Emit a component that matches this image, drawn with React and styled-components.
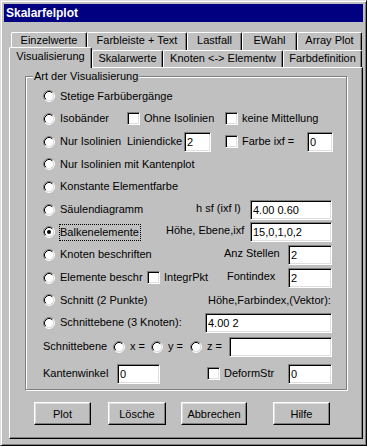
import React from 'react';
import styled, { createGlobalStyle } from 'styled-components';

const GlobalStyle = createGlobalStyle`
	html, body {
		margin: 0;
		padding: 0;
		background: #c0c0c0;
	}
	body {
		font-family: "Liberation Sans", Arial, sans-serif;
		font-size: 11px;
		color: #000;
	}
`;

const Window = styled.div`
	width: 367px;
	height: 446px;
	box-sizing: border-box;
	background: #c0c0c0;
	border: 1px solid;
	border-color: #dfdfdf #000 #000 #dfdfdf;
	box-shadow: inset 1px 1px 0 #fff, inset -1px -1px 0 #808080;
	padding: 3px;
	display: flex;
	flex-direction: column;
`;

const TitleBar = styled.div`
	height: 18px;
	flex: none;
	background: #000080;
	color: #fff;
	font-weight: bold;
	font-size: 12px;
	line-height: 18px;
	padding-left: 2px;
`;

const TabControl = styled.div`
	flex: 1;
	display: flex;
	flex-direction: column;
	margin: 10px 0 3px 5px;
`;

const TabRow = styled.div`
	display: flex;
	flex: none;
	height: ${ p => p.$h }px;
	padding-left: 2px;
`;

const Tab = styled.div`
	flex: none;
	box-sizing: border-box;
	width: ${ p => p.$w }px;
	height: ${ p => p.$active ? p.$h + 4 : p.$h }px;
	margin: ${ p => p.$active ? '-3px 0 -1px -2px' : '0' };
	position: relative;
	z-index: ${ p => p.$active ? 1 : 0 };
	background: #c0c0c0;
	border-top: 1px solid #fff;
	border-left: 1px solid #fff;
	border-right: 1px solid #000;
	border-radius: 2px 2px 0 0;
	box-shadow: inset -1px 0 0 #808080;
	text-align: center;
	line-height: ${ p => p.$active ? 17 : 15 }px;
	white-space: nowrap;
`;

const Panel = styled.div`
	flex: 1;
	box-sizing: border-box;
	border: 1px solid;
	border-color: #fff #000 #000 #fff;
	box-shadow: inset -1px -1px 0 #808080;
	padding: 8px 0 0 15px;
`;

const GroupBox = styled.div`
	box-sizing: border-box;
	width: 322px;
	height: 314px;
	border: 1px solid #808080;
	box-shadow: inset 1px 1px 0 #fff, 1px 1px 0 #fff;
`;

const Caption = styled.div`
	width: fit-content;
	margin: -7px 0 0 7px;
	padding: 0 1px;
	line-height: 13px;
	background: #c0c0c0;
`;

const Rows = styled.div`
	padding: 2px 0 0 17px;
`;

const Row = styled.div`
	display: flex;
	align-items: center;
	height: ${ p => p.$h || 22.67 }px;
	margin-top: ${ p => p.$mt || 0 }px;
	white-space: nowrap;
`;

const Cell = styled.div`
	flex: none;
	width: ${ p => p.$w }px;
	display: flex;
	align-items: center;
`;

const Choice = styled.label`
	display: flex;
	align-items: center;
	gap: 4px;
`;

const ChoiceText = styled.span`
	line-height: 15px;
	padding: 0 1px 0 0;
	border: 1px ${ p => p.$focus ? 'dotted #000' : 'solid transparent' };
`;

const Box = styled.span`
	flex: none;
	box-sizing: border-box;
	width: 13px;
	height: 13px;
	background: #fff;
	border: 1px solid;
	border-color: #808080 #fff #fff #808080;
	box-shadow: inset 1px 1px 0 #000, inset -1px -1px 0 #dfdfdf;
`;

const Text = styled.span`
	line-height: 15px;
	margin-top: ${ p => p.$up ? -3 : 0 }px;
`;

const Field = styled.input`
	flex: none;
	box-sizing: border-box;
	width: ${ p => p.$w }px;
	height: 20px;
	margin: 0;
	padding: 0 0 0 2px;
	border: 1px solid;
	border-color: #808080 #fff #fff #808080;
	box-shadow: inset 1px 1px 0 #000, inset -1px -1px 0 #dfdfdf;
	background: #fff;
	color: #000;
	font: 11px "Liberation Sans", Arial, sans-serif;
	outline: none;
`;

const ButtonRow = styled.div`
	display: flex;
	margin: 12px 0 0 9px;
`;

const Button = styled.button`
	flex: none;
	box-sizing: border-box;
	width: ${ p => p.$w }px;
	height: 23px;
	margin: 0 0 0 ${ p => p.$ml || 0 }px;
	padding: 0;
	background: #c0c0c0;
	border: 1px solid;
	border-color: #fff #000 #000 #fff;
	box-shadow: inset -1px -1px 0 #808080, inset 1px 1px 0 #dfdfdf;
	font: 11px "Liberation Sans", Arial, sans-serif;
	color: #000;
`;

const RadioIcon = ( { checked } ) => (
	<svg width="12" height="12" viewBox="0 0 12 12" style={ { flex: 'none' } }>
		<circle cx="6" cy="6" r="4.5" fill="#fff" />
		<path d="M2.11 9.89 A5.5 5.5 0 0 1 9.89 2.11" fill="none" stroke="#808080" />
		<path d="M9.89 2.11 A5.5 5.5 0 0 1 2.11 9.89" fill="none" stroke="#fff" />
		<path d="M2.82 9.18 A4.5 4.5 0 0 1 9.18 2.82" fill="none" stroke="#000" />
		<path d="M9.18 2.82 A4.5 4.5 0 0 1 2.82 9.18" fill="none" stroke="#dfdfdf" />
		{ checked && <circle cx="6" cy="6" r="2" fill="#000" /> }
	</svg>
);

const Option = ( { label, checked, focus } ) => (
	<Choice>
		<RadioIcon checked={ checked } />
		<ChoiceText $focus={ focus }>{ label }</ChoiceText>
	</Choice>
);

const Check = ( { label } ) => (
	<Choice>
		<Box />
		<Text>{ label }</Text>
	</Choice>
);

const backTabs = [
	[ 'Einzelwerte', 76 ],
	[ 'Farbleiste + Text', 100 ],
	[ 'Lastfall', 55 ],
	[ 'EWahl', 55 ],
	[ 'Array Plot', 65 ],
];

const frontTabs = [
	[ 'Visualisierung', 83, true ],
	[ 'Skalarwerte', 71 ],
	[ 'Knoten <-> Elementw', 120 ],
	[ 'Farbdefinition', 79 ],
];

export default function App() {
	return (
		<>
			<GlobalStyle />
			<Window>
				<TitleBar>Skalarfelplot</TitleBar>
				<TabControl>
					<TabRow $h={ 18 }>
						{ backTabs.map( ( [ name, w ] ) => (
							<Tab key={ name } $w={ w } $h={ 18 }>{ name }</Tab>
						) ) }
					</TabRow>
					<TabRow $h={ 17 }>
						{ frontTabs.map( ( [ name, w, active ] ) => (
							<Tab key={ name } $w={ w } $h={ 17 } $active={ active }>{ name }</Tab>
						) ) }
					</TabRow>
					<Panel>
						<GroupBox>
							<Caption>Art der Visualisierung</Caption>
							<Rows>
								<Row>
									<Option label="Stetige Farbübergänge" />
								</Row>
								<Row>
									<Cell $w={ 84 }><Option label="Isobänder" /></Cell>
									<Cell $w={ 98 }><Check label="Ohne Isolinien" /></Cell>
									<Check label="keine Mittellung" />
								</Row>
								<Row>
									<Cell $w={ 84 }><Option label="Nur Isolinien" /></Cell>
									<Cell $w={ 57 }><Text>Liniendicke</Text></Cell>
									<Cell $w={ 41 }><Field $w={ 27 } value="2" readOnly /></Cell>
									<Cell $w={ 82 }><Check label="Farbe ixf =" /></Cell>
									<Field $w={ 26 } value="0" readOnly />
								</Row>
								<Row>
									<Option label="Nur Isolinien mit Kantenplot" />
								</Row>
								<Row>
									<Option label="Konstante Elementfarbe" />
								</Row>
								<Row>
									<Cell $w={ 153 }><Option label="Säulendiagramm" /></Cell>
									<Cell $w={ 54 }><Text $up>h sf (ixf l)</Text></Cell>
									<Field $w={ 82 } value="4.00 0.60" readOnly />
								</Row>
								<Row>
									<Cell $w={ 123 }><Option label="Balkenelemente" checked focus /></Cell>
									<Cell $w={ 84 }><Text $up>Höhe, Ebene,ixf</Text></Cell>
									<Field $w={ 82 } value="15,0,1,0,2" readOnly />
								</Row>
								<Row>
									<Cell $w={ 181 }><Option label="Knoten beschriften" /></Cell>
									<Cell $w={ 64 }><Text $up>Anz Stellen</Text></Cell>
									<Field $w={ 44 } value="2" readOnly />
								</Row>
								<Row>
									<Cell $w={ 104 }><Option label="Elemente beschr" /></Cell>
									<Cell $w={ 80 }><Check label="IntegrPkt" /></Cell>
									<Cell $w={ 61 }><Text $up>Fontindex</Text></Cell>
									<Field $w={ 44 } value="2" readOnly />
								</Row>
								<Row>
									<Cell $w={ 165 }><Option label="Schnitt (2 Punkte)" /></Cell>
									<Text>Höhe,Farbindex,(Vektor):</Text>
								</Row>
								<Row>
									<Cell $w={ 162 }><Option label="Schnittebene (3 Knoten):" /></Cell>
									<Field $w={ 127 } value="4.00 2" readOnly />
								</Row>
								<Row $h={ 23 } $mt={ 1 }>
									<Cell $w={ 70 }><Text>Schnittebene</Text></Cell>
									<Cell $w={ 38 }><Option label="x =" /></Cell>
									<Cell $w={ 39 }><Option label="y =" /></Cell>
									<Cell $w={ 39 }><Option label="z =" /></Cell>
									<Field $w={ 103 } value="" readOnly />
								</Row>
								<Row $h={ 23 } $mt={ 4 }>
									<Cell $w={ 74 }><Text>Kantenwinkel</Text></Cell>
									<Cell $w={ 90 }><Field $w={ 43 } value="0" readOnly /></Cell>
									<Cell $w={ 81 }><Check label="DeformStr" /></Cell>
									<Field $w={ 44 } value="0" readOnly />
								</Row>
							</Rows>
						</GroupBox>
						<ButtonRow>
							<Button $w={ 57 }>Plot</Button>
							<Button $w={ 58 } $ml={ 17 }>Lösche</Button>
							<Button $w={ 66 } $ml={ 15 }>Abbrechen</Button>
							<Button $w={ 57 } $ml={ 26 }>Hilfe</Button>
						</ButtonRow>
					</Panel>
				</TabControl>
			</Window>
		</>
	);
}
